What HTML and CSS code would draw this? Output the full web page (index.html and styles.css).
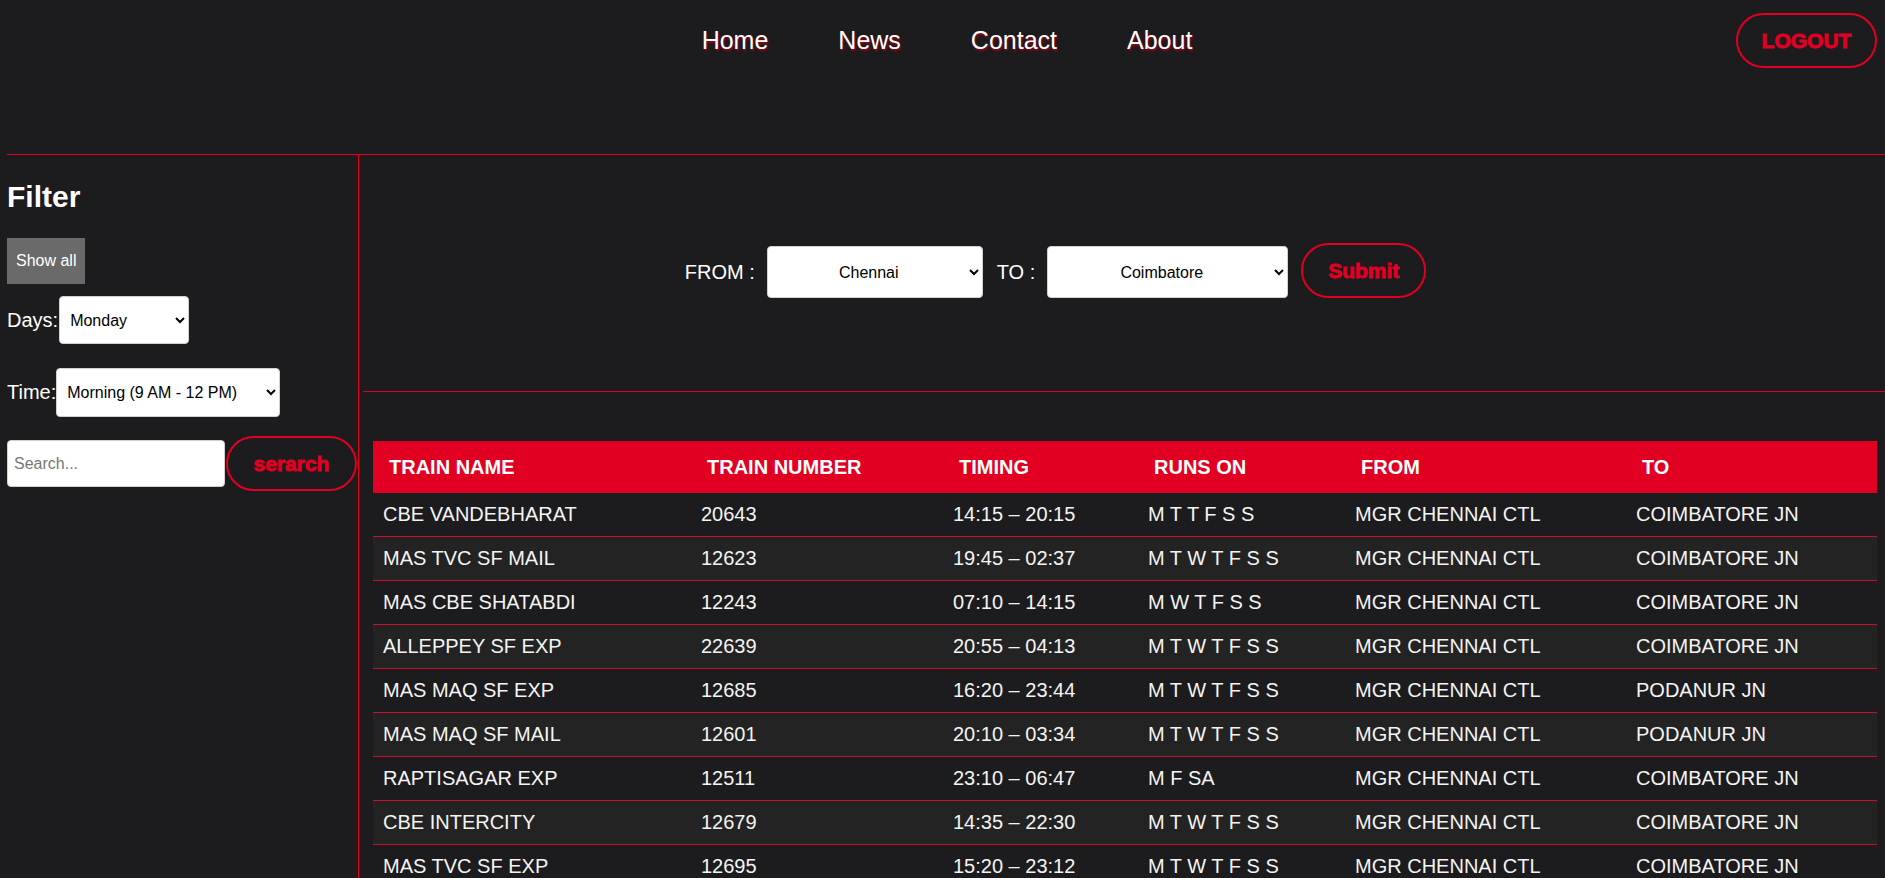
FILE: index.html
```html
<!DOCTYPE html>
<html lang="en">
<head>
<meta charset="utf-8">
<title>Train Search</title>
<link rel="stylesheet" href="styles.css">
</head>
<body>
<header class="topbar">
  <div class="topbar-spacer"></div>
  <nav class="nav">
    <a class="nav-link" href="#">Home</a>
    <a class="nav-link" href="#">News</a>
    <a class="nav-link" href="#">Contact</a>
    <a class="nav-link" href="#">About</a>
  </nav>
  <div class="topbar-actions">
    <button class="btn-outline btn-logout">LOGOUT</button>
  </div>
</header>

<div class="layout">
  <aside class="sidebar">
    <h2 class="sidebar-title">Filter</h2>
    <button class="btn-gray">Show all</button>
    <div class="filter-row filter-days">
      <label class="filter-label">Days:</label>
      <select class="select select-days">
        <option>Monday</option>
        <option>Tuesday</option>
        <option>Wednesday</option>
      </select>
    </div>
    <div class="filter-row filter-time">
      <label class="filter-label">Time:</label>
      <select class="select select-time">
        <option>Morning (9 AM - 12 PM)</option>
        <option>Afternoon (12 PM - 4 PM)</option>
      </select>
    </div>
    <div class="filter-row filter-search">
      <input class="search-input" type="text" placeholder="Search...">
      <button class="btn-outline btn-search">serarch</button>
    </div>
  </aside>

  <main class="main">
    <section class="route-form">
      <span class="route-label">FROM :</span>
      <select class="select select-route select-from">
        <option>Chennai</option>
      </select>
      <span class="route-label">TO :</span>
      <select class="select select-route select-to">
        <option>Coimbatore</option>
      </select>
      <button class="btn-outline btn-submit">Submit</button>
    </section>

    <table class="trains">
      <colgroup>
        <col class="c-name"><col class="c-num"><col class="c-time"><col class="c-runs"><col class="c-from"><col class="c-to">
      </colgroup>
      <thead>
        <tr><th>TRAIN NAME</th><th>TRAIN NUMBER</th><th>TIMING</th><th>RUNS ON</th><th>FROM</th><th>TO</th></tr>
      </thead>
      <tbody>
        <tr><td>CBE VANDEBHARAT</td><td>20643</td><td>14:15 – 20:15</td><td>M T T F S S</td><td>MGR CHENNAI CTL</td><td>COIMBATORE JN</td></tr>
        <tr><td>MAS TVC SF MAIL</td><td>12623</td><td>19:45 – 02:37</td><td>M T W T F S S</td><td>MGR CHENNAI CTL</td><td>COIMBATORE JN</td></tr>
        <tr><td>MAS CBE SHATABDI</td><td>12243</td><td>07:10 – 14:15</td><td>M W T F S S</td><td>MGR CHENNAI CTL</td><td>COIMBATORE JN</td></tr>
        <tr><td>ALLEPPEY SF EXP</td><td>22639</td><td>20:55 – 04:13</td><td>M T W T F S S</td><td>MGR CHENNAI CTL</td><td>COIMBATORE JN</td></tr>
        <tr><td>MAS MAQ SF EXP</td><td>12685</td><td>16:20 – 23:44</td><td>M T W T F S S</td><td>MGR CHENNAI CTL</td><td>PODANUR JN</td></tr>
        <tr><td>MAS MAQ SF MAIL</td><td>12601</td><td>20:10 – 03:34</td><td>M T W T F S S</td><td>MGR CHENNAI CTL</td><td>PODANUR JN</td></tr>
        <tr><td>RAPTISAGAR EXP</td><td>12511</td><td>23:10 – 06:47</td><td>M F SA</td><td>MGR CHENNAI CTL</td><td>COIMBATORE JN</td></tr>
        <tr><td>CBE INTERCITY</td><td>12679</td><td>14:35 – 22:30</td><td>M T W T F S S</td><td>MGR CHENNAI CTL</td><td>COIMBATORE JN</td></tr>
        <tr><td>MAS TVC SF EXP</td><td>12695</td><td>15:20 – 23:12</td><td>M T W T F S S</td><td>MGR CHENNAI CTL</td><td>COIMBATORE JN</td></tr>
        <tr><td>NILGIRI EXP</td><td>12671</td><td>21:05 – 05:10</td><td>M T W T F S S</td><td>MGR CHENNAI CTL</td><td>COIMBATORE JN</td></tr>
        <tr><td>CHERAN EXP</td><td>12673</td><td>22:10 – 05:45</td><td>M T W T F S S</td><td>MGR CHENNAI CTL</td><td>COIMBATORE JN</td></tr>
      </tbody>
    </table>
  </main>
</div>
</body>
</html>
```

FILE: styles.css
```css
* { box-sizing: border-box; }

html, body {
  margin: 0;
  padding: 0;
  background: #1c1b1e;
  color: #ffffff;
  font-family: "Liberation Sans", Arial, sans-serif;
}

/* ---------- top bar ---------- */
.topbar {
  display: grid;
  grid-template-columns: 1fr auto 1fr;
  align-items: center;
  height: 154px;
  padding-top: 13px;
  align-content: start;
}

.nav {
  display: flex;
  gap: 70px;
  padding-left: 9px;
  height: 55px;
  align-items: center;
}

.nav-link {
  color: #ffffff;
  text-decoration: none;
  font-size: 25px;
  text-shadow: 1px 2px 2px rgba(170, 0, 20, 0.85);
}

.topbar-actions {
  display: flex;
  justify-content: flex-end;
  padding-right: 8px;
}

.btn-outline {
  background: transparent;
  border: 2px solid #e10022;
  border-radius: 30px;
  color: #e10022;
  font-family: "Liberation Sans", Arial, sans-serif;
  font-weight: 700;
  font-size: 21px;
  -webkit-text-stroke: 0.8px #e10022;
  cursor: pointer;
  padding: 0;
  height: 55px;
}

.btn-logout { width: 141px; }

/* ---------- layout ---------- */
.layout {
  display: flex;
  margin-left: 7px;
  border-top: 1px solid #e10022;
  min-height: calc(100vh - 154px);
}

.sidebar {
  width: 352px;
  flex: none;
  border-right: 1px solid #e10022;
}

.sidebar-title {
  margin: 25px 0 0;
  font-size: 30px;
  font-weight: 700;
  line-height: 34px;
}

.btn-gray {
  margin-top: 24px;
  height: 46px;
  padding: 0 9px;
  background: #6a6a6a;
  color: #ffffff;
  border: none;
  font-family: "Liberation Sans", Arial, sans-serif;
  font-size: 16px;
}

.filter-row {
  display: flex;
  align-items: center;
}

.filter-days { margin-top: 12px; }
.filter-time { margin-top: 24px; }
.filter-search { margin-top: 19px; }

.filter-label {
  font-size: 20px;
  color: #ffffff;
}

.select {
  background: #ffffff;
  color: #000000;
  border: 1px solid #d0d0d0;
  border-radius: 4px;
  font-family: "Liberation Sans", Arial, sans-serif;
  font-size: 16px;
  padding: 0 6px;
}

.select-days { width: 130px; height: 48px; margin-left: 1px; }
.select-time { width: 224px; height: 49px; margin-left: 0; }

.search-input {
  width: 218px;
  height: 47px;
  border: 1px solid #d0d0d0;
  border-radius: 4px;
  padding: 0 6px;
  font-family: "Liberation Sans", Arial, sans-serif;
  font-size: 16px;
  background: #ffffff;
}

.search-input::placeholder { color: #777777; }

.btn-search { width: 131px; margin-left: 1px; }

/* ---------- main ---------- */
.main {
  flex: 1;
  min-width: 0;
}

.route-form {
  margin-left: 4px;
  height: 237px;
  border-bottom: 1px solid #e10022;
  display: flex;
  align-items: center;
  justify-content: center;
  padding-right: 137px;
  padding-bottom: 2px;
}

.route-label {
  font-size: 20px;
  color: #ffffff;
}

.select-route {
  height: 52px;
  text-align: center;
  text-align-last: center;
}

.select-from { width: 216px; margin: 0 14px 0 12px; }
.select-to { width: 241px; margin: 0 13px 0 12px; }

.btn-submit { width: 125px; margin-bottom: 3px; }

/* ---------- table ---------- */
.trains {
  margin: 49px 0 0 14px;
  width: 1504px;
  border-collapse: collapse;
  table-layout: fixed;
}

.c-name { width: 318px; }
.c-num { width: 252px; }
.c-time { width: 195px; }
.c-runs { width: 207px; }
.c-from { width: 281px; }
.c-to { width: 251px; }

.trains thead tr { background: #e10022; }

.trains th {
  text-align: left;
  font-size: 20px;
  font-weight: 700;
  line-height: 24px;
  padding: 14px 16px;
  color: #ffffff;
  white-space: nowrap;
}

.trains td {
  font-size: 20px;
  line-height: 23px;
  padding: 10px 10px;
  color: #f4f4f4;
  white-space: nowrap;
}

.trains tbody tr { border-bottom: 1px solid #c8102e; }
.trains tbody tr:nth-child(even) { background: #232323; }
```
